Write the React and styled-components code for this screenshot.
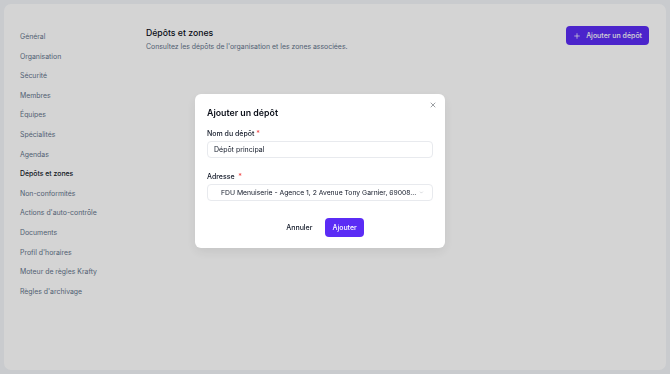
import React, { useState } from 'react'
import styled, { createGlobalStyle } from 'styled-components'
import { X, Plus, ChevronDown } from 'lucide-react'

const GlobalStyle = createGlobalStyle`
  html, body {
    margin: 0;
    padding: 0;
    background: #f2f5f8;
    font-family: Inter, "Noto Sans", sans-serif;
  }
  * { box-sizing: border-box; }
`

const sections = [
  'Général',
  'Organisation',
  'Sécurité',
  'Membres',
  'Équipes',
  'Spécialités',
  'Agendas',
  'Dépôts et zones',
  'Non-conformités',
  "Actions d'auto-contrôle",
  'Documents',
  "Profil d'horaires",
  'Moteur de règles Krafty',
  "Règles d'archivage",
]

function App() {
  const [name, setName] = useState('Dépôt principal')

  return (
    <>
      <GlobalStyle />
      <Frame>
        <Panel>
          <Sidebar>
            {sections.map((s) => (
              <NavItem key={s} $active={s === 'Dépôts et zones'}>
                {s}
              </NavItem>
            ))}
          </Sidebar>
          <Main>
            <HeaderRow>
              <div>
                <Title>Dépôts et zones</Title>
                <Subtitle>Consultez les dépôts de l'organisation et les zones associées.</Subtitle>
              </div>
              <PrimaryButton $big>
                <Plus size={8} strokeWidth={2.2} />
                Ajouter un dépôt
              </PrimaryButton>
            </HeaderRow>
          </Main>
        </Panel>
      </Frame>

      <Overlay>
        <Dialog>
          <CloseButton>
            <X size={8} strokeWidth={2} />
          </CloseButton>
          <DialogTitle>Ajouter un dépôt</DialogTitle>
          <Field>
            <Label>
              Nom du dépôt <Req>*</Req>
            </Label>
            <Input value={name} onChange={(e) => setName(e.target.value)} />
          </Field>
          <Field $gap>
            <Label>
              Adresse&nbsp; <Req>*</Req>
            </Label>
            <Select>
              <SelectText>FDU Menuiserie - Agence 1, 2 Avenue Tony Garnier, 69008...</SelectText>
              <ChevronDown size={7} strokeWidth={1.6} color="#8a8f98" />
            </Select>
          </Field>
          <Actions>
            <GhostButton>Annuler</GhostButton>
            <PrimaryButton>Ajouter</PrimaryButton>
          </Actions>
        </Dialog>
      </Overlay>
    </>
  )
}

const Frame = styled.div`
  height: 374px;
  padding: 4px;
`

const Panel = styled.div`
  height: 100%;
  background: #ffffff;
  border-radius: 7px;
  display: flex;
`

const Sidebar = styled.nav`
  width: 126px;
  padding: 26px 0 0 16px;
  display: flex;
  flex-direction: column;
`

const NavItem = styled.div`
  height: 19.6px;
  font-size: 6.9px;
  line-height: 14px;
  color: ${(p) => (p.$active ? '#111827' : '#64748b')};
  font-weight: ${(p) => (p.$active ? 500 : 400)};
  white-space: nowrap;
`

const Main = styled.main`
  flex: 1;
  padding: 22px 17px 0 16px;
`

const HeaderRow = styled.div`
  display: flex;
  justify-content: space-between;
  align-items: flex-start;
`

const Title = styled.h1`
  margin: 0;
  font-size: 8.7px;
  line-height: 14px;
  font-weight: 500;
  color: #0b0f19;
`

const Subtitle = styled.p`
  margin: 1px 0 0;
  font-size: 6.9px;
  line-height: 12px;
  color: #64748b;
`

const PrimaryButton = styled.button`
  display: inline-flex;
  align-items: center;
  justify-content: center;
  gap: 5px;
  height: 19px;
  padding: 0 ${(p) => (p.$big ? '7px' : '7px')} 0 ${(p) => (p.$big ? '7px' : '7px')};
  border: none;
  border-radius: 4px;
  background: #5b2cf5;
  color: #fff;
  font-family: inherit;
  font-size: 7px;
  font-weight: 500;
  cursor: pointer;
`

const Overlay = styled.div`
  position: fixed;
  inset: 0;
  background: rgba(0, 0, 0, 0.17);
  display: flex;
  align-items: flex-start;
  padding: 94px 0 0 195px;
`

const Dialog = styled.div`
  position: relative;
  width: 250px;
  height: 154px;
  background: #fff;
  border-radius: 6px;
  padding: 12px 12px 0 12px;
  box-shadow: 0 4px 12px rgba(0, 0, 0, 0.08);
`

const CloseButton = styled.button`
  position: absolute;
  top: 6px;
  right: 7px;
  width: 10px;
  height: 10px;
  padding: 0;
  border: none;
  background: transparent;
  color: #6b6f76;
  display: flex;
  align-items: center;
  justify-content: center;
`

const DialogTitle = styled.h2`
  margin: 0 0 9px;
  font-size: 8.8px;
  line-height: 13px;
  font-weight: 600;
  color: #0b0f19;
`

const Field = styled.div`
  display: flex;
  flex-direction: column;
  gap: 2px;
  margin-top: ${(p) => (p.$gap ? '13px' : '0')};
`

const Label = styled.label`
  font-size: 7px;
  line-height: 11px;
  font-weight: 500;
  color: #111827;
`

const Req = styled.span`
  color: #ef4444;
`

const Input = styled.input`
  height: 17px;
  padding: 0 6px;
  border: 1px solid #e8eaee;
  border-radius: 4px;
  font-family: inherit;
  font-size: 7px;
  color: #111827;
  outline: none;
`

const Select = styled.div`
  height: 17px;
  padding: 0 8px 0 13px;
  border: 1px solid #e8eaee;
  border-radius: 4px;
  display: flex;
  align-items: center;
  justify-content: space-between;
  gap: 3px;
`

const SelectText = styled.span`
  font-size: 6.8px;
  color: #111827;
  white-space: nowrap;
`

const Actions = styled.div`
  display: flex;
  justify-content: center;
  align-items: center;
  gap: 5px;
  margin-top: 17px;
  padding-left: 2px;
`

const GhostButton = styled.button`
  height: 19px;
  padding: 0 8px;
  border: none;
  background: transparent;
  font-family: inherit;
  font-size: 7px;
  font-weight: 500;
  color: #111827;
`

export default App
